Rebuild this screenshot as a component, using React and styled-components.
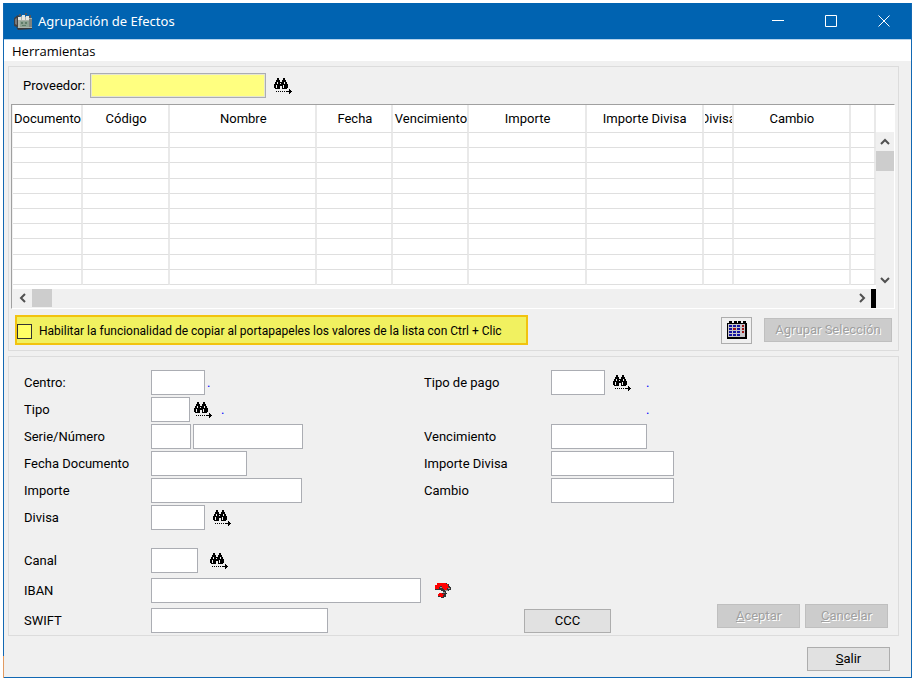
import React from 'react';
import styled, { createGlobalStyle } from 'styled-components';

const columns = [
    { title: 'Documento', width: 70 },
    { title: 'Código', width: 87 },
    { title: 'Nombre', width: 147 },
    { title: 'Fecha', width: 76 },
    { title: 'Vencimiento', width: 76 },
    { title: 'Importe', width: 117 },
    { title: 'Importe Divisa', width: 117 },
    { title: 'Divisa', width: 30 },
    { title: 'Cambio', width: 117 },
    { title: '', width: 25 },
];

const rows = Array.from({ length: 10 }, (_, i) => i);

const AppIcon = () => (
    <svg width="18" height="17" viewBox="0 0 18 17" aria-hidden="true">
        <path d="M0 5L4 2L6 4V15L0 13Z" fill="#3f3f42" />
        <path d="M1 6L3 5V12L1 11Z" fill="#77787a" />
        <path d="M4 5L8 3L18 5V15L4 16Z" fill="#aab3aa" />
        <path d="M6 8H15V14H6Z" fill="#8ea393" />
        <path d="M7 9h2v2H7zM11 9h2v2h-2zM8 12h4v1H8z" fill="#5f7d69" />
        <path d="M4 4h3v3H4zM8 2h3v5H8zM12 3h3v4h-3z" fill="#e4e6e2" />
        <path d="M5 1h2v2H5zM11 0h2v2h-2zM15 2h2v3h-2z" fill="#55565a" />
        <path d="M15 6h3v8h-3z" fill="#7d827e" />
        <path d="M2 14L4 15H18V16L4 17Z" fill="#38393c" />
    </svg>
);

const Binoculars = () => (
    <svg width="18" height="16" viewBox="0 0 18 16" shapeRendering="crispEdges" aria-hidden="true">
        <path d="M3 0h2v2H3zM9 0h2v2H9zM2 2h4v2H2zM8 2h4v2H8zM1 4h5v7H1zM6 4h2v4H6zM8 4h5v7H8zM0 6h1v4H0zM13 6h1v4h-1z" />
        <path d="M3 4h1v2H3zM10 4h1v2h-1zM2 7h1v3H2zM9 7h1v3H9zM6 5h1v1H6z" fill="#f0f0f0" />
        <path d="M2 13h1v1H2zM4 13h1v1H4zM6 13h1v1H6zM8 13h1v1H8zM10 13h1v1h-1zM12 13h6v1h-6zM15 11h1v5h-1zM16 12h1v3h-1z" />
    </svg>
);

const HelpMark = () => (
    <svg width="18" height="15" viewBox="0 0 18 15" shapeRendering="crispEdges" aria-hidden="true">
        <path d="M3 0h10v1h2v2h1v1h1v3h-2v1h-3v2h1v1h-1v3h-2v1H7v-1H4v-2h3v-2h2V8H7V7H1V2h2z" fill="#333" />
        <path d="M3 0h9v1h2v3h1v1h-2v2h-3V6H9V5H8V3H6v1H5v2H1V2h2zM5 10h3v1h2v1H9v2H6v-1H4v-2h1z" fill="#f00" />
        <path d="M6 4h2v1H6zM14 5h2v1h-2zM11 7h3v1h-3zM9 9h2v1H9z" fill="#999" />
    </svg>
);

const Calendar = () => (
    <svg width="20" height="18" viewBox="0 0 20 18" shapeRendering="crispEdges" aria-hidden="true">
        <path d="M0 2h20v16H0z" />
        <path d="M1 3h17v13H1z" fill="#c6c6ca" />
        <path d="M2 0h3v3H2zM7 0h3v3H7zM11 0h3v3h-3zM16 0h3v3h-3z" />
        <path d="M2 4h3v2H2zM6 4h3v2H6zM10 4h3v2h-3zM2 7h3v2H2zM10 7h3v2h-3zM2 10h3v2H2zM6 10h3v2H6zM10 10h3v2h-3zM2 13h3v2H2zM6 13h3v2H6zM10 13h3v2h-3z" fill="#1414a0" />
        <path d="M6 7h3v2H6zM15 4h2v2h-2zM15 7h2v2h-2zM15 10h2v2h-2z" fill="#a01414" />
    </svg>
);

const Chevron = ({ points }) => (
    <svg width="10" height="10" viewBox="0 0 10 10" aria-hidden="true">
        <polyline points={points} fill="none" stroke="#505050" strokeWidth="2" />
    </svg>
);

const Field = ({ id, label, widths, lookup, dot, gap }) => (
    <FormRow>
        <Label htmlFor={id}>{label}</Label>
        {widths.map((w, i) => (
            <Input key={i} id={i ? `${id}${i}` : id} aria-label={i ? label : undefined} $width={w} />
        ))}
        {lookup && <LookupButton type="button" aria-label={`Buscar ${label}`} $gap={gap}><Binoculars /></LookupButton>}
        {dot && <Dot $gap={dot}>.</Dot>}
    </FormRow>
);

const App = () => {

    const [copy, setCopy] = React.useState(false);

    return (
        <>
            <GlobalStyle />
            <Window>
                <TitleBar>
                    <AppIcon />
                    <h1>Agrupación de Efectos</h1>
                    <WindowButton type="button" aria-label="Minimizar">
                        <svg width="12" height="12" viewBox="0 0 12 12"><path d="M0 5.5H12" /></svg>
                    </WindowButton>
                    <WindowButton type="button" aria-label="Maximizar">
                        <svg width="12" height="12" viewBox="0 0 12 12"><path d="M.5 .5H11.5V11.5H.5Z" /></svg>
                    </WindowButton>
                    <WindowButton type="button" aria-label="Cerrar">
                        <svg width="12" height="12" viewBox="0 0 12 12"><path d="M.5 .5L11.5 11.5M11.5 .5L.5 11.5" /></svg>
                    </WindowButton>
                </TitleBar>
                <MenuBar>
                    <button type="button">Herramientas</button>
                </MenuBar>
                <Body>
                    <Panel>
                        <SearchRow>
                            <label htmlFor="proveedor">Proveedor:</label>
                            <Input id="proveedor" $width={176} $highlight />
                            <LookupButton type="button" aria-label="Buscar proveedor" $gap={8}><Binoculars /></LookupButton>
                        </SearchRow>
                        <ListBox>
                            <Table>
                                <colgroup>
                                    {columns.map((c, i) => <col key={i} width={c.width} />)}
                                </colgroup>
                                <thead>
                                    <tr>{columns.map((c, i) => <th key={i}><span>{c.title}</span></th>)}</tr>
                                </thead>
                                <tbody>
                                    {rows.map(r => (
                                        <tr key={r}>{columns.map((c, i) => <td key={i} />)}</tr>
                                    ))}
                                </tbody>
                            </Table>
                            <VerticalBar>
                                <button type="button" aria-label="Subir"><Chevron points="1,7 5,3 9,7" /></button>
                                <Thumb />
                                <button type="button" aria-label="Bajar"><Chevron points="1,3 5,7 9,3" /></button>
                            </VerticalBar>
                            <HorizontalBar>
                                <button type="button" aria-label="Izquierda"><Chevron points="7,1 3,5 7,9" /></button>
                                <Thumb />
                                <button type="button" aria-label="Derecha"><Chevron points="3,1 7,5 3,9" /></button>
                                <Marker />
                            </HorizontalBar>
                        </ListBox>
                        <Actions>
                            <CopyOption>
                                <input type="checkbox" checked={copy} onChange={e => setCopy(e.target.checked)} />
                                Habilitar la funcionalidad de copiar al portapapeles los valores de la lista con Ctrl + Clic
                            </CopyOption>
                            <CalendarButton type="button" aria-label="Calendario"><Calendar /></CalendarButton>
                            <Button type="button" $width={128} disabled>Agrupar Selección</Button>
                        </Actions>
                    </Panel>
                    <Panel>
                        <Form>
                            <Columns>
                                <FormColumn>
                                    <Field id="centro" label="Centro:" widths={[54]} dot={2} />
                                    <Field id="tipo" label="Tipo" widths={[39]} lookup gap={4} dot={9} />
                                    <Field id="serie" label="Serie/Número" widths={[40, 110]} />
                                    <Field id="fecha" label="Fecha Documento" widths={[96]} />
                                    <Field id="importe" label="Importe" widths={[151]} />
                                    <Field id="divisa" label="Divisa" widths={[54]} lookup gap={8} />
                                </FormColumn>
                                <FormColumn>
                                    <Field id="pago" label="Tipo de pago" widths={[54]} lookup gap={8} dot={15} />
                                    <DotRow><Dot $gap={2}>.</Dot></DotRow>
                                    <Field id="vencimiento" label="Vencimiento" widths={[96]} />
                                    <Field id="importeDivisa" label="Importe Divisa" widths={[123]} />
                                    <Field id="cambio" label="Cambio" widths={[123]} />
                                </FormColumn>
                            </Columns>
                            <BankArea>
                                <BankFields>
                                    <Field id="canal" label="Canal" widths={[47]} lookup gap={12} />
                                    <FormRow>
                                        <Label htmlFor="iban">IBAN</Label>
                                        <Input id="iban" $width={270} />
                                        <LookupButton type="button" aria-label="Ayuda IBAN" $gap={13}><HelpMark /></LookupButton>
                                    </FormRow>
                                    <Field id="swift" label="SWIFT" widths={[177]} />
                                </BankFields>
                                <Button type="button" $width={87}>CCC</Button>
                                <Confirm>
                                    <Button type="button" $width={83} disabled><u>A</u>ceptar</Button>
                                    <Button type="button" $width={83} disabled><u>C</u>ancelar</Button>
                                </Confirm>
                            </BankArea>
                        </Form>
                    </Panel>
                    <Footer>
                        <Button type="button" $width={83}><u>S</u>alir</Button>
                    </Footer>
                </Body>
            </Window>
        </>
    );
};

export default App;

const GlobalStyle = createGlobalStyle`
    *{
        box-sizing:border-box;
    }
    body{
        margin:0;
        padding:3px 4px 2px 3px;
        background:#fff;
        color:#000;
        font:13px/16px Roboto, "Liberation Sans", sans-serif;
    }
    button, input{
        font:inherit;
        color:inherit;
        margin:0;
        padding:0;
    }
    svg{
        display:block;
        flex:none;
    }
`

const Window = styled.div`
    padding:0 1px 1px;
    background:linear-gradient(#e39a5f, #e39a5f) left bottom / 1px 22px no-repeat, #1268b3;
`

const TitleBar = styled.header`
    display:flex;
    align-items:center;
    height:36px;
    padding:0 1px 0 10px;
    background:#0063b1;
    color:#fff;
    font-family:"Noto Sans", "Open Sans", sans-serif;
    h1{
        flex:1;
        margin:0 0 0 6px;
        font-size:13px;
        font-weight:400;
    }
`

const WindowButton = styled.button`
    display:flex;
    align-items:center;
    justify-content:center;
    width:53px;
    height:36px;
    border:none;
    background:none;
    path{
        fill:none;
        stroke:#fff;
    }
`

const MenuBar = styled.nav`
    display:flex;
    height:22px;
    border-top:1px solid #b5d3ec;
    background:#fff;
    button{
        padding:0 8px;
        border:none;
        background:none;
        font-family:"Open Sans", "Noto Sans", sans-serif;
    }
`

const Body = styled.main`
    padding:5px 12px 6px 4px;
    background:#f0f0f0;
`

const Panel = styled.section`
    border:1px solid #dcdcdc;
    & + &{
        margin-top:5px;
    }
`

const SearchRow = styled.div`
    display:flex;
    align-items:center;
    padding:6px 14px;
    label{
        width:67px;
    }
`

const Input = styled.input`
    width:${p => p.$width}px;
    height:25px;
    border:1px solid #abadb3;
    background:${p => p.$highlight ? '#ffff80' : '#fff'};
    box-shadow:${p => p.$highlight ? 'inset 0 0 0 1px #e6e6d0' : 'none'};
    outline:none;
    & + &{
        margin-left:2px;
    }
`

const LookupButton = styled.button`
    margin-left:${p => p.$gap}px;
    border:none;
    background:none;
`

const ListBox = styled.div`
    display:grid;
    grid-template-columns:1fr 18px;
    grid-template-rows:184px 19px;
    margin:0 3px 0 2px;
    padding-left:1px;
    border:1px solid #fff;
    border-top-color:#a0a0a0;
    border-left-color:#a0a0a0;
    background:#f0f0f0;
`

const Table = styled.table`
    table-layout:fixed;
    width:100%;
    height:184px;
    border-collapse:separate;
    border-spacing:0;
    background:#fff;
    border-bottom:4px solid #fff;
    th, td{
        padding:0;
        border-right:2px solid #e9e9e9;
        border-bottom:1px solid #dfdfdf;
    }
    th{
        height:28px;
        padding-left:1px;
        font-weight:400;
        span{
            display:flex;
            justify-content:center;
            overflow:hidden;
            white-space:nowrap;
        }
    }
`

const Thumb = styled.div`
    flex:none;
    width:20px;
    height:18px;
    background:#cdcdcd;
`

const VerticalBar = styled.div`
    display:flex;
    flex-direction:column;
    align-items:center;
    border-top:27px solid #fff;
    button{
        display:flex;
        align-items:center;
        justify-content:center;
        width:18px;
        height:19px;
        border:none;
        background:none;
    }
    ${Thumb}{
        width:18px;
        height:20px;
        margin-bottom:auto;
    }
`

const HorizontalBar = styled.div`
    display:flex;
    button{
        display:flex;
        align-items:center;
        justify-content:center;
        width:19px;
        height:18px;
        border:none;
        background:none;
    }
    ${Thumb}{
        margin-right:auto;
    }
`

const Marker = styled.div`
    width:5px;
    background:#000;
`

const Actions = styled.div`
    display:flex;
    align-items:center;
    gap:12px;
    padding:6px 6px 5px;
`

const CopyOption = styled.label`
    display:flex;
    align-items:center;
    gap:7px;
    height:30px;
    margin-right:auto;
    padding:2px 24px 0 0;
    border:2px solid #f2c30f;
    background:#f1f160;
    font-size:12px;
    white-space:nowrap;
    input{
        appearance:none;
        width:15px;
        height:15px;
        border:1px solid #333;
        background:#ffff66;
    }
    input:checked{
        background:#333;
        box-shadow:inset 0 0 0 3px #ffff66;
    }
`

const CalendarButton = styled.button`
    display:flex;
    align-items:center;
    justify-content:center;
    width:31px;
    height:27px;
    border:1px solid #adadad;
    background:#f0f0f0;
`

const Button = styled.button`
    width:${p => p.$width}px;
    height:24px;
    border:1px solid #adadad;
    background:#e1e1e1;
    &:disabled{
        border-color:#bfbfbf;
        background:#ccc;
        color:#a0a0a0;
        text-shadow:1px 1px 0 #fff;
    }
`

const Form = styled.div`
    padding:13px 10px 2px 15px;
`

const Columns = styled.div`
    display:grid;
    grid-template-columns:400px 1fr;
`

const FormColumn = styled.div`
    display:flex;
    flex-direction:column;
    gap:2px;
`

const FormRow = styled.div`
    display:flex;
    align-items:center;
    height:25px;
`

const Label = styled.label`
    width:127px;
`

const Dot = styled.span`
    margin-left:${p => p.$gap}px;
    color:#00f;
`

const DotRow = styled(FormRow)`
    padding-left:220px;
`

const BankArea = styled.div`
    display:flex;
    align-items:flex-end;
    margin-top:18px;
`

const BankFields = styled.div`
    display:flex;
    flex-direction:column;
    gap:5px;
    width:500px;
`

const Confirm = styled.div`
    display:flex;
    gap:5px;
    margin:0 0 5px auto;
`

const Footer = styled.footer`
    display:flex;
    justify-content:flex-end;
    padding:11px 9px 0;
`
